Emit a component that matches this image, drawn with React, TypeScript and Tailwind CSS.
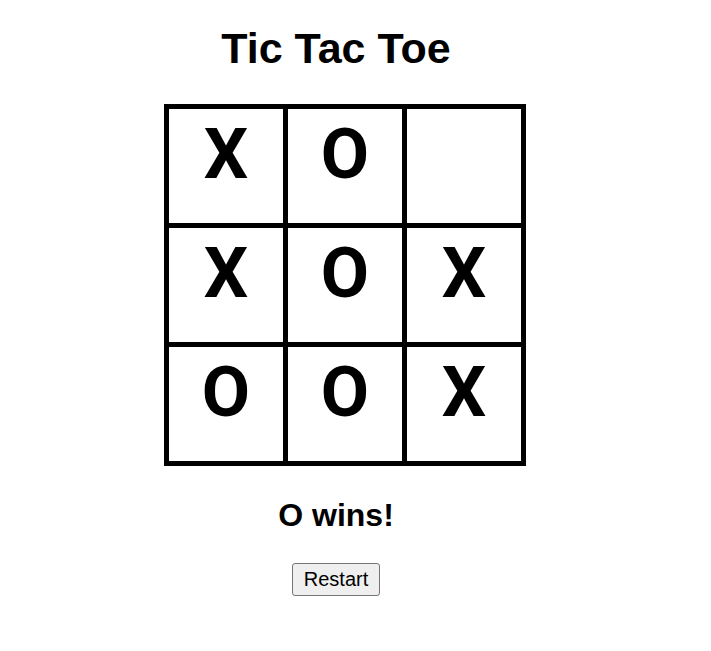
import React, { useState } from 'react';

type Mark = 'X' | 'O' | null;

const initialBoard: Mark[] = ['X', 'O', null, 'X', 'O', 'X', 'O', 'O', 'X'];

export default function App() {
  const [cells, setCells] = useState<Mark[]>(initialBoard);

  return (
    <div className="w-[672px] flex flex-col items-center font-['Liberation_Sans',Arial,sans-serif] text-black bg-white">
      <h1 className="mt-[27px] text-[43px] leading-[43px] font-bold">Tic Tac Toe</h1>

      {/* Board: black background shows through the gaps as grid lines */}
      <div className="mt-[34px] ml-[18px] grid grid-cols-3 gap-[5px] p-[5px] bg-black">
        {cells.map((cell, i) => (
          <div
            key={i}
            className="w-[114px] h-[114px] bg-white flex justify-center pt-[11px] text-[70px] leading-[68px] font-bold font-['Roboto',Arial,sans-serif]"
          >
            {cell}
          </div>
        ))}
      </div>

      <div className="mt-[33px] text-[32px] leading-[32px] font-bold">O wins!</div>

      <button
        onClick={() => setCells(Array(9).fill(null))}
        className="mt-[32px] px-[11px] py-[4px] text-[20px] leading-[23px] bg-[#efefef] border border-[#767676] rounded-[3px]"
      >
        Restart
      </button>
    </div>
  );
}
